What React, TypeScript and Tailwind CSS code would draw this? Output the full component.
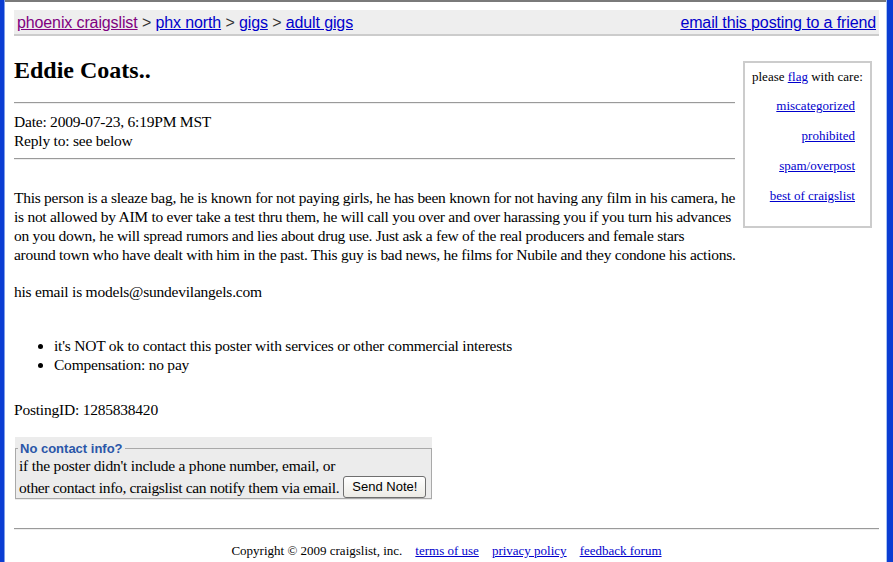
const serif = "font-['Liberation_Serif','Times_New_Roman',serif]";
const sans = "font-['Liberation_Sans',Arial,sans-serif]";
const link = "text-[#0000cc] underline";

function Breadcrumbs() {
  return (
    <div className={`${sans} mt-[8px] h-[26px] flex items-center justify-between bg-[#eeeeee] border-b-2 border-[#cccccc] px-[3px] pt-[1px] text-[16px] leading-[20px] tracking-[-0.12px]`}>
      <div>
        <a className="text-[#800080] underline">phoenix craigslist</a>
        <span className="text-[#333]"> &gt; </span>
        <a className={link}>phx north</a>
        <span className="text-[#333]"> &gt; </span>
        <a className={link}>gigs</a>
        <span className="text-[#333]"> &gt; </span>
        <a className={link}>adult gigs</a>
      </div>
      <a className={link}>email this posting to a friend</a>
    </div>
  );
}

function Flags() {
  return (
    <div className={`${serif} ml-[8px] mt-[25px] w-[129px] h-[167px] shrink-0 border-2 border-[#cccccc] text-[13px] pt-[6px] pl-[7px] pr-[15px]`}>
      <div className="leading-[16px] whitespace-nowrap">
        please <a className={link}>flag</a> with care:
      </div>
      <div className="mt-[6px] text-right leading-[30px]">
        <div><a className={link}>miscategorized</a></div>
        <div><a className={link}>prohibited</a></div>
        <div><a className={link}>spam/overpost</a></div>
        <div><a className={link}>best of craigslist</a></div>
      </div>
    </div>
  );
}

function Rule() {
  return <div className="h-[2px] border-t border-[#9a9a9a] border-b border-b-[#eeeeee]" />;
}

export default function App() {
  return (
    <div className="w-[893px] h-[562px] flex overflow-hidden bg-white text-black">
      <div className="w-[4px] bg-[#0b3dd3]" />
      <div className="w-[1px] bg-[#7e9ee8]" />
      <div className={`${serif} flex-1 flex flex-col border-t-2 border-[#7a7a7a] pl-[9px] pr-[7px]`}>
        <Breadcrumbs />

        <div className="flex">
          <div className="w-[721px] shrink-0 text-[15.5px] leading-[19px] tracking-[-0.22px]">
            <h2 className="mt-[20px] text-[24px] leading-[28px] font-bold tracking-normal">Eddie Coats..</h2>
            <div className="mt-[18px]"><Rule /></div>
            <div className="mt-[8px]">Date: 2009-07-23, 6:19PM MST</div>
            <div>Reply to: see below</div>
            <div className="mt-[8px]"><Rule /></div>

            <p className="mt-[28px] whitespace-nowrap tracking-[-0.27px]">
              This person is a sleaze bag, he is known for not paying girls, he has been known for not having any film in his camera, he
              <br />
              is not allowed by AIM to ever take a test thru them, he will call you over and over harassing you if you turn his advances
              <br />
              on you down, he will spread rumors and lies about drug use. Just ask a few of the real producers and female stars
              <br />
              around town who have dealt with him in the past. This guy is bad news, he films for Nubile and they condone his actions.
            </p>
            <p className="mt-[18px]">his email is models@sundevilangels.com</p>

            <ul className="mt-[35px] pl-[40px] list-disc">
              <li>it's NOT ok to contact this poster with services or other commercial interests</li>
              <li>Compensation: no pay</li>
            </ul>

            <p className="mt-[26px]">PostingID: 1285838420</p>
          </div>
          <Flags />
        </div>

        <div className="mt-[18px] ml-[1px] w-[417px] bg-[#ececec] pt-[4px] pb-[1px]">
          <fieldset className="border border-[#a9a9a9] mx-0 pl-[3px] pr-[2px] pb-0">
            <legend className={`${sans} -ml-[1px] px-[2px] text-[13px] leading-[15px] font-bold text-[#2a56a8]`}>
              No contact info?
            </legend>
            <div className="text-[15.5px] leading-[20px] tracking-[-0.22px] whitespace-nowrap">
              if the poster didn't include a phone number, email, or
            </div>
            <div className="flex items-center text-[15.5px] leading-[21px]">
              <span className="whitespace-nowrap tracking-[-0.33px]">other contact info, craigslist can notify them via email.</span>
              <button className={`${sans} ml-[4px] h-[22px] px-[8px] whitespace-nowrap text-[13px] leading-[18px] border border-[#6f6f6f] rounded-[3px] bg-gradient-to-b from-white to-[#ecebe6]`}>
                Send Note!
              </button>
            </div>
          </fieldset>
        </div>

        <div className="mt-[28px]"><Rule /></div>
        <div className="mt-[13px] flex justify-center text-[13px] leading-[16px]">
          <span>Copyright © 2009 craigslist, inc.</span>
          <a className={`${link} ml-[13px]`}>terms of use</a>
          <a className={`${link} ml-[13px]`}>privacy policy</a>
          <a className={`${link} ml-[13px]`}>feedback forum</a>
        </div>
      </div>
      <div className="w-[1px] bg-[#a9c4f2]" />
      <div className="w-[6px] bg-[#0b3dd3]" />
    </div>
  );
}
